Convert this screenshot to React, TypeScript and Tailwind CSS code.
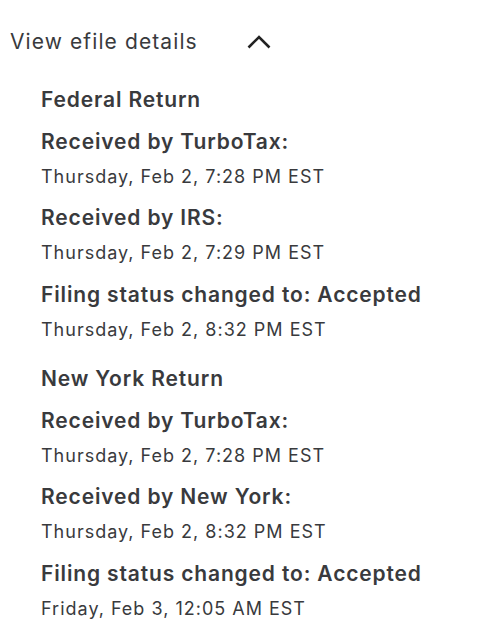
type Event = { label: string; date: string };

const sections: { title: string; events: Event[] }[] = [
  {
    title: "Federal Return",
    events: [
      { label: "Received by TurboTax:", date: "Thursday, Feb 2, 7:28 PM EST" },
      { label: "Received by IRS:", date: "Thursday, Feb 2, 7:29 PM EST" },
      { label: "Filing status changed to: Accepted", date: "Thursday, Feb 2, 8:32 PM EST" },
    ],
  },
  {
    title: "New York Return",
    events: [
      { label: "Received by TurboTax:", date: "Thursday, Feb 2, 7:28 PM EST" },
      { label: "Received by New York:", date: "Thursday, Feb 2, 8:32 PM EST" },
      { label: "Filing status changed to: Accepted", date: "Friday, Feb 3, 12:05 AM EST" },
    ],
  },
];

const gapFor = ["mt-[14px]", "mt-[15px]", "mt-[16px]"];

export default function App() {
  return (
    <div className="min-h-screen bg-white text-[#393a3d] font-['Inter',sans-serif] [font-variant-ligatures:none]">
      <button className="flex items-center pl-[10px] pt-[28px]">
        <span className="w-[237px] text-left text-[21px] leading-[28px] tracking-[1.1px]">View efile details</span>
        <svg width="24" height="14" viewBox="0 0 24 14" fill="none" className="text-[#222]">
          <polyline points="1.5,12.5 12,2 22.5,12.5" stroke="currentColor" strokeWidth="2.6" />
        </svg>
      </button>
      <div className="pl-[41px] pt-[30px] flex flex-col gap-[23px]">
        {sections.map((s) => (
          <div key={s.title} className="flex flex-col">
            <h3 className="text-[21px] leading-[28px] font-semibold tracking-[0.85px]">{s.title}</h3>
            {s.events.map((e, i) => (
              <div key={e.label + e.date} className={`${gapFor[i]} flex flex-col`}>
                <div className="text-[21px] leading-[28px] font-semibold tracking-[0.85px]">{e.label}</div>
                <div className="text-[18px] leading-[24px] mt-[9px] tracking-[1px]">{e.date}</div>
              </div>
            ))}
          </div>
        ))}
      </div>
    </div>
  );
}
